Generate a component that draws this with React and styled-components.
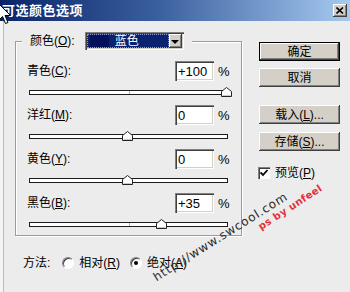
import React from "react";
import styled, { createGlobalStyle } from "styled-components";

const GlobalStyle = createGlobalStyle`
  html, body {
    margin: 0;
    padding: 0;
    background: #ececec;
  }
  body {
    width: 350px;
    height: 292px;
    overflow: hidden;
    font-family: "Liberation Sans", "Noto Sans CJK SC", sans-serif;
    font-size: 12px;
    color: #000;
  }
`;

const FONT = `"Liberation Sans", "Noto Sans CJK SC", sans-serif`;

const Window = styled.div`
    position: relative;
    width: 350px;
    height: 292px;
    overflow: hidden;
    background: #ececec;
    box-shadow: inset 3px 0 0 #f4f4f4, inset 4px 0 0 #bcbcbc;
`;

const TitleBar = styled.div`
    height: 21px;
    display: flex;
    align-items: center;
    justify-content: space-between;
    padding: 0 3px 0 2px;
    background: linear-gradient(90deg, #0a246a 0%, #3a5f9e 45%, #a6caf0 100%);
    color: #fff;
    font-weight: bold;
    font-size: 13px;
    letter-spacing: 0.5px;
    line-height: 21px;
`;

const CloseBtn = styled.div`
    width: 14px;
    height: 13px;
    display: flex;
    align-items: center;
    justify-content: center;
    background: #d4d0c8;
    box-shadow: inset -1px -1px 0 #404040, inset 1px 1px 0 #fff, inset -2px -2px 0 #808080;
`;

const Body = styled.div`
    display: flex;
    padding: 11px 0 0 15px;
`;

const Left = styled.div`
    display: flex;
    flex-direction: column;
    width: 227px;
`;

const Group = styled.fieldset`
    margin: 0;
    width: 227px;
    box-sizing: border-box;
    border: 1px solid #9c9c9c;
    box-shadow: 1px 1px 0 #fff, inset 1px 1px 0 #fff;
    padding: 11px 11px 8px 11px;
    display: flex;
    flex-direction: column;
    gap: 10px;
`;

const Legend = styled.legend`
    display: flex;
    align-items: center;
    margin-left: -5px;
    padding: 0 8px 0 8px;
    background: #ececec;
    height: 18px;
`;

const Label = styled.span`
    flex: ${(props) => (props.grow ? 1 : "none")};
    font-size: 12px;
    line-height: 14px;
    white-space: nowrap;
`;

const Combo = styled.div`
    display: flex;
    width: 99px;
    height: 18px;
    margin-left: 10px;
    box-sizing: border-box;
    padding: 2px;
    background: #fff;
    box-shadow: inset 1px 1px 0 #808080, inset 2px 2px 0 #404040, inset -1px -1px 0 #fff, inset -2px -2px 0 #d4d0c8;
`;

const ComboValue = styled.div`
    flex: 1;
    display: flex;
    align-items: center;
    gap: 6px;
    padding-left: 3px;
    background: #0b2270;
    outline: 1px dotted #8c9bd0;
    outline-offset: -1px;
    color: #fff;
    font-size: 12px;
    line-height: 14px;
`;

const Swatch = styled.span`
    width: 19px;
    height: 12px;
    background: ${(props) => props.color};
`;

const ComboArrow = styled.div`
    width: 13px;
    display: flex;
    align-items: center;
    justify-content: center;
    background: #d4d0c8;
    box-shadow: inset -1px -1px 0 #404040, inset 1px 1px 0 #fff, inset -2px -2px 0 #808080;

    &::after {
        content: "";
        border-left: 4px solid transparent;
        border-right: 4px solid transparent;
        border-top: 4px solid #000;
        margin-top: 1px;
    }
`;

const Row = styled.div`
    display: flex;
    flex-direction: column;
`;

const Head = styled.div`
    display: flex;
    align-items: center;
    height: 20px;
`;

const Num = styled.div`
    width: 39px;
    height: 20px;
    box-sizing: border-box;
    display: flex;
    align-items: center;
    padding-left: 3px;
    background: #fff;
    font-size: 13px;
    box-shadow: inset 1px 1px 0 #808080, inset 2px 2px 0 #404040, inset -1px -1px 0 #fff, inset -2px -2px 0 #d4d0c8;
`;

const Pct = styled.span`
    width: 12px;
    margin-left: 4px;
    font-size: 13px;
`;

const Track = styled.div`
    position: relative;
    height: 5px;
    margin: 9px 2px 0;
    box-sizing: border-box;
    border: 1px solid #1c1c1c;
    background: #fff;

    &::after {
        content: "";
        position: absolute;
        left: 50%;
        top: 0;
        width: 1px;
        height: 3px;
        background: #b0b0b0;
    }
`;

const Thumb = styled.svg`
    position: absolute;
    top: -4px;
    z-index: 1;
`;

const Method = styled.div`
    display: flex;
    align-items: center;
    height: 16px;
    margin: 19px 0 0 8px;
`;

const Radio = styled.span`
    width: 12px;
    height: 12px;
    box-sizing: border-box;
    border-radius: 50%;
    margin: 0 5px 0 ${(props) => props.gap}px;
    display: flex;
    align-items: center;
    justify-content: center;
    background: #fff;
    border: 1px solid;
    border-color: #808080 #fff #fff #808080;
    box-shadow: inset 1px 1px 0 #404040;

    &::after {
        content: "";
        width: 4px;
        height: 4px;
        border-radius: 50%;
        background: ${(props) => (props.checked ? "#000" : "transparent")};
    }
`;

const Side = styled.div`
    display: flex;
    flex-direction: column;
    width: 81px;
    margin-left: 17px;
    padding-top: 10px;
`;

const Btn = styled.button`
    height: 19px;
    width: 81px;
    margin: ${(props) => props.gap || 0}px 0 0;
    padding: 0;
    border: none;
    background: #d4d0c8;
    color: #000;
    font: 12px ${FONT};
    line-height: 14px;
    box-shadow: ${(props) =>
        props.primary
            ? "inset 0 0 0 1px #000, inset -2px -2px 0 #404040, inset 2px 2px 0 #fff, inset -3px -3px 0 #808080"
            : "inset -1px -1px 0 #404040, inset 1px 1px 0 #fff, inset -2px -2px 0 #808080"};
`;

const CheckRow = styled.div`
    display: flex;
    align-items: center;
    margin: 15px 0 0 -1px;
    gap: 5px;
`;

const Check = styled.span`
    width: 12px;
    height: 12px;
    box-sizing: border-box;
    display: flex;
    align-items: center;
    justify-content: center;
    background: #fff;
    box-shadow: inset 1px 1px 0 #808080, inset 2px 2px 0 #404040, inset -1px -1px 0 #fff;
`;

const Stamp = styled.div`
    position: absolute;
    left: ${(props) => props.x}px;
    top: ${(props) => props.y}px;
    transform: rotate(${(props) => props.deg}deg);
    transform-origin: 0 100%;
    white-space: nowrap;
    line-height: 1;
    pointer-events: none;
`;

const SiteStamp = styled(Stamp)`
    font: 12px "DejaVu Sans", sans-serif;
    letter-spacing: 0.8px;
    color: #2a2a2a;
`;

const AuthorStamp = styled(Stamp)`
    font: bold 10px "DejaVu Sans", sans-serif;
    letter-spacing: 0.4px;
    color: #e3303a;
`;

const Cursor = styled.svg`
    position: absolute;
    left: -2px;
    top: 3px;
`;

const rows = [
    { name: "青色", key: "C", value: "+100", pos: 100 },
    { name: "洋红", key: "M", value: "0", pos: 0 },
    { name: "黄色", key: "Y", value: "0", pos: 0 },
    { name: "黑色", key: "B", value: "+35", pos: 35 },
];

const Slider = ({ pos }) => (
    <Track>
        <Thumb
            width="11"
            height="10"
            viewBox="0 0 11 10"
            style={{ left: `calc(${(pos + 100) / 2}% - 6.5px)` }}
        >
            <path d="M0.5 9.5 V4.5 L5.5 0.5 L10.5 4.5 V9.5 Z" fill="#fff" stroke="#222" />
            <path d="M1.5 8.5 H9.5" stroke="#c8c8c8" />
        </Thumb>
    </Track>
);

const App = () => {
    return (
        <Window>
            <GlobalStyle />
            <TitleBar>
                <span>可选颜色选项</span>
                <CloseBtn>
                    <svg width="8" height="7" viewBox="0 0 8 7">
                        <path d="M0.5 0.5 L7 6.5 M7 0.5 L0.5 6.5" stroke="#000" strokeWidth="1.6" />
                    </svg>
                </CloseBtn>
            </TitleBar>
            <Body>
                <Left>
                    <Group>
                        <Legend>
                            <Label>
                                颜色(<u>O</u>):
                            </Label>
                            <Combo>
                                <ComboValue>
                                    <Swatch color="#04115a" />
                                    蓝色
                                </ComboValue>
                                <ComboArrow />
                            </Combo>
                        </Legend>
                        {rows.map((item) => (
                            <Row key={item.key}>
                                <Head>
                                    <Label grow>
                                        {item.name}(<u>{item.key}</u>):
                                    </Label>
                                    <Num>{item.value}</Num>
                                    <Pct>%</Pct>
                                </Head>
                                <Slider pos={item.pos} />
                            </Row>
                        ))}
                    </Group>
                    <Method>
                        <Label>方法:</Label>
                        <Radio gap={12} />
                        <Label>
                            相对(<u>R</u>)
                        </Label>
                        <Radio gap={10} checked />
                        <Label>
                            绝对(<u>A</u>)
                        </Label>
                    </Method>
                </Left>
                <Side>
                    <Btn primary>确定</Btn>
                    <Btn gap={7}>取消</Btn>
                    <Btn gap={18}>
                        载入(<u>L</u>)...
                    </Btn>
                    <Btn gap={8}>
                        存储(<u>S</u>)...
                    </Btn>
                    <CheckRow>
                        <Check>
                            <svg width="8" height="8" viewBox="0 0 8 8">
                                <path d="M0.5 3.5 L3 6 L7.5 1" stroke="#000" strokeWidth="1.8" fill="none" />
                            </svg>
                        </Check>
                        <Label>
                            预览(<u>P</u>)
                        </Label>
                    </CheckRow>
                </Side>
            </Body>
            <SiteStamp x={158} y={270} deg={-32}>
                http://www.swcool.com
            </SiteStamp>
            <AuthorStamp x={262} y={221} deg={-33}>
                ps by unfeel
            </AuthorStamp>
            <Cursor width="13" height="22" viewBox="0 0 13 22">
                <path
                    d="M0.5 0.5 V17.5 L4.5 13.5 L7.5 20.5 L10 19.5 L7 12.5 H12.5 Z"
                    fill="#fff"
                    stroke="#000"
                />
            </Cursor>
        </Window>
    );
};

export default App;
